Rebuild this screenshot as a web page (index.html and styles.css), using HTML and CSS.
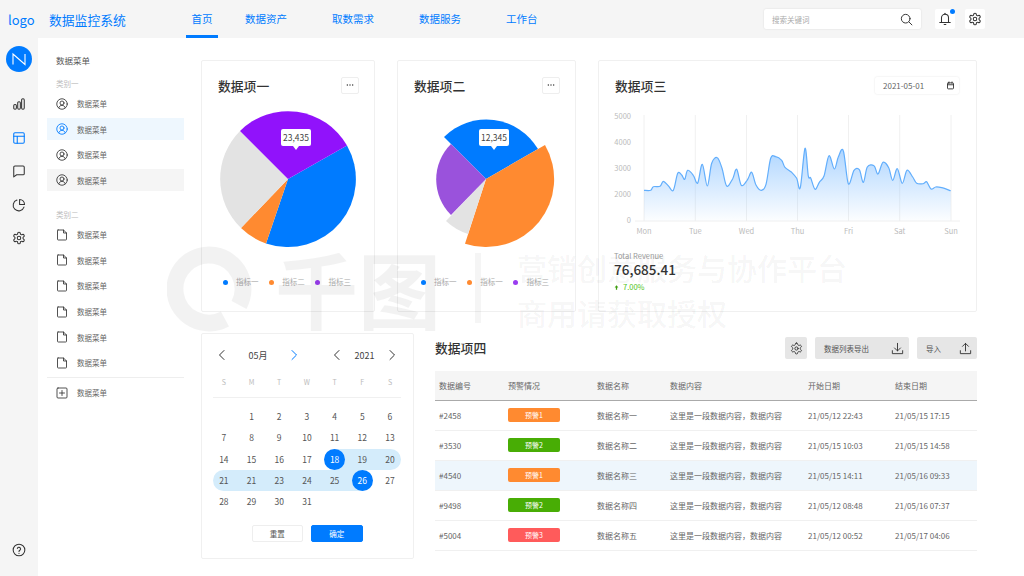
FILE: index.html
```html
<!DOCTYPE html>
<html lang="zh-CN">
<head>
  <meta charset="UTF-8" />
  <title>数据监控系统</title>
  <link rel="stylesheet" href="styles.css">
</head>
<body>

  <!-- ICON SPRITE -->
  <svg class="sprite" xmlns="http://www.w3.org/2000/svg">
    <symbol id="i-user" viewBox="0 0 24 24"><circle cx="12" cy="12" r="10.5"/><circle cx="12" cy="10" r="4"/><path d="M5.5 19.5c1-3.2 3.6-4.8 6.5-4.8s5.500 1.600 6.500 4.800"/></symbol>
    <symbol id="i-doc" viewBox="0 0 24 24"><path d="M4 2h11l6 6v12.500a1.500 1.500 0 0 1-1.500 1.500h-15A1.500 1.500 0 0 1 3 20.500V3.500A1.500 1.500 0 0 1 4 2z"/><path d="M15 2v6h6"/></symbol>
    <symbol id="i-plus" viewBox="0 0 24 24"><rect x="2" y="2" width="20" height="20" rx="2"/><path d="M12 7v10M7 12h10"/></symbol>
    <symbol id="i-bars" viewBox="0 0 24 24"><rect x="3" y="13" width="4.500" height="8" rx="2"/><rect x="9.800" y="8" width="4.500" height="13" rx="2"/><rect x="16.500" y="3" width="4.500" height="18" rx="2"/></symbol>
    <symbol id="i-layout" viewBox="0 0 24 24"><rect x="3" y="3" width="18" height="18" rx="2"/><path d="M3 9h18M9 9v12"/></symbol>
    <symbol id="i-chat" viewBox="0 0 24 24"><path d="M5 3.500h14A2 2 0 0 1 21 5.500v11a2 2 0 0 1-2 2H8l-5 3.500V5.500a2 2 0 0 1 2-2z"/></symbol>
    <symbol id="i-pie" viewBox="0 0 24 24"><path d="M20.500 15.500A9.500 9.500 0 1 1 8.500 3.500"/><path d="M13 2.500a9 9 0 0 1 8.500 8.500H13z"/></symbol>
    <symbol id="i-gear" viewBox="0 0 24 24"><path d="M12.220 2h-.44a2 2 0 0 0-2 2v.18a2 2 0 0 1-1 1.730l-.43.25a2 2 0 0 1-2 0l-.15-.08a2 2 0 0 0-2.730.73l-.22.38a2 2 0 0 0 .73 2.730l.15.1a2 2 0 0 1 1 1.720v.51a2 2 0 0 1-1 1.740l-.15.09a2 2 0 0 0-.73 2.730l.22.38a2 2 0 0 0 2.730.73l.15-.08a2 2 0 0 1 2 0l.43.25a2 2 0 0 1 1 1.730V20a2 2 0 0 0 2 2h.44a2 2 0 0 0 2-2v-.18a2 2 0 0 1 1-1.730l.43-.25a2 2 0 0 1 2 0l.15.08a2 2 0 0 0 2.730-.73l.22-.39a2 2 0 0 0-.73-2.730l-.15-.08a2 2 0 0 1-1-1.740v-.5a2 2 0 0 1 1-1.740l.15-.09a2 2 0 0 0 .73-2.730l-.22-.38a2 2 0 0 0-2.730-.73l-.15.08a2 2 0 0 1-2 0l-.43-.25a2 2 0 0 1-1-1.730V4a2 2 0 0 0-2-2z"/><circle cx="12" cy="12" r="3"/></symbol>
    <symbol id="i-help" viewBox="0 0 24 24"><circle cx="12" cy="12" r="10"/><path d="M9.200 9.300a2.900 2.900 0 0 1 5.600.9c0 1.900-2.800 2.500-2.800 4.300"/><path d="M12 17.800v.2"/></symbol>
    <symbol id="i-search" viewBox="0 0 24 24"><circle cx="10.500" cy="10.500" r="8"/><path d="M16.500 16.500L22 22"/></symbol>
    <symbol id="i-bell" viewBox="0 0 24 24"><path d="M6 18V10a6 6 0 0 1 12 0v8"/><path d="M3 18h18"/><path d="M12 2v2"/><path d="M10.500 21.500h3"/></symbol>
    <symbol id="i-left" viewBox="0 0 24 24"><path d="M16 3L7 12l9 9"/></symbol>
    <symbol id="i-right" viewBox="0 0 24 24"><path d="M8 3l9 9-9 9"/></symbol>
    <symbol id="i-cal" viewBox="0 0 24 24"><rect x="4" y="5" width="16" height="16" rx="2"/><path d="M4 10h16M8 2.500V6M16 2.500V6"/></symbol>
    <symbol id="i-down" viewBox="0 0 24 24"><path d="M12 2.500v14M6.500 11l5.500 5.500 5.500-5.500"/><path d="M2.500 16v5.500h19V16"/></symbol>
    <symbol id="i-up" viewBox="0 0 24 24"><path d="M12 16.500v-14M6.500 8L12 2.500 17.500 8"/><path d="M2.500 16v5.500h19V16"/></symbol>
    <symbol id="i-dots" viewBox="0 0 18 17"><circle cx="6" cy="8" r=".8"/><circle cx="9" cy="8" r=".8"/><circle cx="12" cy="8" r=".8"/></symbol>
  </svg>

  <div class="app">

    <!-- TOP BAR -->
    <header class="topbar">
      <div class="logo">logo</div>
      <div class="app-title">数据监控系统</div>
      <nav class="nav">
        <a class="nav-item active">首页</a>
        <a class="nav-item">数据资产</a>
        <a class="nav-item">取数需求</a>
        <a class="nav-item">数据服务</a>
        <a class="nav-item">工作台</a>
      </nav>
      <div class="top-tools">
        <div class="search">
          <span>搜索关键词</span>
          <svg class="icon search-icon"><use href="#i-search"/></svg>
        </div>
        <div class="tool-btn bell">
          <svg class="icon"><use href="#i-bell"/></svg>
          <i class="dot"></i>
        </div>
        <div class="tool-btn">
          <svg class="icon"><use href="#i-gear"/></svg>
        </div>
      </div>
    </header>

    <div class="body-row">

      <!-- ICON RAIL -->
      <aside class="rail">
        <div class="avatar">
          <svg viewBox="0 0 26 26"><path d="M7 18.500V8L19 18.500V8"/></svg>
        </div>
        <svg class="icon"><use href="#i-bars"/></svg>
        <svg class="icon blue"><use href="#i-layout"/></svg>
        <svg class="icon"><use href="#i-chat"/></svg>
        <svg class="icon"><use href="#i-pie"/></svg>
        <svg class="icon"><use href="#i-gear"/></svg>
        <svg class="icon help"><use href="#i-help"/></svg>
      </aside>

      <!-- MENU -->
      <aside class="menu">
        <div class="menu-title">数据菜单</div>
        <div class="menu-cat">类别一</div>
        <div class="menu-group">
          <div class="menu-item"><svg class="icon"><use href="#i-user"/></svg>数据菜单</div>
          <div class="menu-item selected"><svg class="icon"><use href="#i-user"/></svg>数据菜单</div>
          <div class="menu-item"><svg class="icon"><use href="#i-user"/></svg>数据菜单</div>
          <div class="menu-item hover"><svg class="icon"><use href="#i-user"/></svg>数据菜单</div>
        </div>
        <div class="menu-cat second">类别二</div>
        <div class="menu-group">
          <div class="menu-item"><svg class="icon"><use href="#i-doc"/></svg>数据菜单</div>
          <div class="menu-item"><svg class="icon"><use href="#i-doc"/></svg>数据菜单</div>
          <div class="menu-item"><svg class="icon"><use href="#i-doc"/></svg>数据菜单</div>
          <div class="menu-item"><svg class="icon"><use href="#i-doc"/></svg>数据菜单</div>
          <div class="menu-item"><svg class="icon"><use href="#i-doc"/></svg>数据菜单</div>
          <div class="menu-item"><svg class="icon"><use href="#i-doc"/></svg>数据菜单</div>
        </div>
        <div class="menu-line"></div>
        <div class="menu-item"><svg class="icon"><use href="#i-plus"/></svg>数据菜单</div>
      </aside>

      <main class="main">

        <div class="row-top">

          <!-- CARD 1 -->
          <section class="card pie-card">
            <div class="card-head">
              <h2>数据项一</h2>
              <div class="more"><svg><use href="#i-dots"/></svg></div>
            </div>
            <div class="pie-wrap">
              <svg class="pie" viewBox="202 100 172 160">
                <path fill="#007bff" d="M288 179L347 145.500A68 68 0 0 1 266 243.500Z"/>
                <path fill="#ff8a30" d="M288 179L266 243.500A68 68 0 0 1 241 228Z"/>
                <path fill="#e3e3e3" d="M288 179L241 228A68 68 0 0 1 240 131Z"/>
                <path fill="#9112fb" d="M288 179L240 131A68 68 0 0 1 347 145.500Z"/>
              </svg>
              <div class="pie-tip first">23,435</div>
            </div>
            <div class="legend">
              <span class="legend-item"><i class="c-blue"></i>指标一</span>
              <span class="legend-item"><i class="c-orange"></i>指标二</span>
              <span class="legend-item"><i class="c-purple"></i>指标三</span>
            </div>
          </section>

          <!-- CARD 2 -->
          <section class="card pie-card wide">
            <div class="card-head">
              <h2>数据项二</h2>
              <div class="more"><svg><use href="#i-dots"/></svg></div>
            </div>
            <div class="pie-wrap">
              <svg class="pie" viewBox="398 100 177 160">
                <path fill="#007bff" d="M486 179L444 137A60 60 0 0 1 538 149Z"/>
                <path fill="#ff8a30" d="M486 179L545 145A68 68 0 0 1 465 243.700Z"/>
                <path fill="#e3e3e3" d="M486 179L468 234A58 58 0 0 1 446 221Z"/>
                <path fill="#9a52dc" d="M486 179L451 215A50 50 0 0 1 451 144Z"/>
              </svg>
              <div class="pie-tip second">12,345</div>
            </div>
            <div class="legend">
              <span class="legend-item"><i class="c-blue"></i>指标一</span>
              <span class="legend-item"><i class="c-orange"></i>指标一</span>
              <span class="legend-item"><i class="c-purple"></i>指标三</span>
            </div>
          </section>

          <!-- CARD 3 -->
          <section class="card line-card">
            <div class="card-head">
              <h2>数据项三</h2>
              <div class="date-box">2021-05-01<svg class="icon"><use href="#i-cal"/></svg></div>
            </div>
            <svg class="line-chart" viewBox="599 105 377 135">
              <defs>
                <linearGradient id="areaFill" x1="0" y1="0" x2="0" y2="1">
                  <stop offset="0" stop-color="#7dbcff" stop-opacity=".62"/>
                  <stop offset="1" stop-color="#7dbcff" stop-opacity=".02"/>
                </linearGradient>
              </defs>
              <g class="grid">
                <path d="M644 115V221M695.300 115V221M746.500 115V221M797.500 115V221M848.500 115V221M899.700 115V221M951 115V221M635 221H960"/>
              </g>
              <path id="chartArea" fill="url(#areaFill)"/>
              <path id="chartLine" class="chart-line"/>
              <g class="axis-y">
                <text x="631" y="115.700">5000</text>
                <text x="631" y="141.700">4000</text>
                <text x="631" y="167.500">3000</text>
                <text x="631" y="193.500">2000</text>
                <text x="631" y="219.500">0</text>
              </g>
              <g class="axis-x">
                <text x="644" y="230.600">Mon</text>
                <text x="695.300" y="230.600">Tue</text>
                <text x="746.500" y="230.600">Wed</text>
                <text x="797.500" y="230.600">Thu</text>
                <text x="848.500" y="230.600">Fri</text>
                <text x="899.700" y="230.600">Sat</text>
                <text x="951" y="230.600">Sun</text>
              </g>
            </svg>
            <div class="stats">
              <div class="stats-label">Total Revenue</div>
              <div class="stats-value">76,685.41</div>
              <div class="stats-trend"><svg viewBox="0 0 8 8"><path d="M4 0.500L7 4H5V7.500H3V4H1Z"/></svg>7.00%</div>
            </div>
          </section>
        </div>

        <div class="row-bottom">

          <!-- CALENDAR -->
          <section class="card calendar">
            <div class="cal-head">
              <div class="cal-month">
                <svg class="icon"><use href="#i-left"/></svg>
                <span>05月</span>
                <svg class="icon blue"><use href="#i-right"/></svg>
              </div>
              <div class="cal-year">
                <svg class="icon"><use href="#i-left"/></svg>
                <span>2021</span>
                <svg class="icon"><use href="#i-right"/></svg>
              </div>
            </div>
            <div class="cal-week">
              <span>S</span><span>M</span><span>T</span><span>W</span><span>T</span><span>F</span><span>S</span>
            </div>
            <div class="cal-line"></div>
            <div class="cal-days">
              <span></span><span>1</span><span>2</span><span>3</span><span>4</span><span>5</span><span>6</span>
              <span>7</span><span>8</span><span>9</span><span>10</span><span>11</span><span>12</span><span>13</span>
              <span>14</span><span>15</span><span>16</span><span>17</span><span class="band pick from">18</span><span class="band">19</span><span class="band tail">20</span>
              <span class="band head">21</span><span class="band">21</span><span class="band">23</span><span class="band">24</span><span class="band">25</span><span class="band pick to">26</span><span>27</span>
              <span>28</span><span>29</span><span>30</span><span>31</span><span></span><span></span><span></span>
            </div>
            <div class="cal-actions">
              <button class="btn">重置</button>
              <button class="btn primary">确定</button>
            </div>
          </section>

          <!-- TABLE -->
          <section class="table-block">
            <div class="table-head">
              <h2>数据项四</h2>
              <div class="table-tools">
                <div class="gray-btn square"><svg class="icon"><use href="#i-gear"/></svg></div>
                <div class="gray-btn export">数据列表导出<svg class="icon"><use href="#i-down"/></svg></div>
                <div class="gray-btn import">导入<svg class="icon"><use href="#i-up"/></svg></div>
              </div>
            </div>
            <table class="data-table">
              <colgroup>
                <col class="c1"><col class="c2"><col class="c3"><col class="c4"><col class="c5"><col class="c6">
              </colgroup>
              <thead>
                <tr><th>数据编号</th><th>预警情况</th><th>数据名称</th><th>数据内容</th><th>开始日期</th><th>结束日期</th></tr>
              </thead>
              <tbody>
                <tr><td>#2458</td><td><span class="tag orange">预警1</span></td><td>数据名称一</td><td>这里是一段数据内容，数据内容</td><td>21/05/12 22:43</td><td>21/05/15 17:15</td></tr>
                <tr><td>#3530</td><td><span class="tag green">预警2</span></td><td>数据名称二</td><td>这里是一段数据内容，数据内容</td><td>21/05/15 10:03</td><td>21/05/15 14:58</td></tr>
                <tr class="on"><td>#4540</td><td><span class="tag orange">预警1</span></td><td>数据名称三</td><td>这里是一段数据内容，数据内容</td><td>21/05/15 14:11</td><td>21/05/16 09:33</td></tr>
                <tr><td>#9498</td><td><span class="tag green">预警2</span></td><td>数据名称四</td><td>这里是一段数据内容，数据内容</td><td>21/05/12 08:48</td><td>21/05/16 07:37</td></tr>
                <tr><td>#5004</td><td><span class="tag red">预警3</span></td><td>数据名称五</td><td>这里是一段数据内容，数据内容</td><td>21/05/12 00:52</td><td>21/05/17 04:06</td></tr>
              </tbody>
            </table>
          </section>
        </div>
      </main>
    </div>

    <!-- WATERMARK IN THE REFERENCE -->
    <div class="mark" aria-hidden="true">
      <svg class="mark-ring" viewBox="0 0 90 90"><path d="M72 62A34 34 0 1 0 58 76"/></svg>
      <div class="mark-brand">千图</div>
      <div class="mark-bar"></div>
      <div class="mark-text">营销创意服务与协作平台<br>商用请获取授权</div>
    </div>
  </div>

  <script src="chart.js"></script>
</body>
</html>
```

FILE: styles.css
```css
* {
  box-sizing: border-box;
}

body {
  margin: 0;
  font-family: "Noto Sans CJK SC", "Noto Sans", sans-serif;
  color: #333;
  background: #fff;
}

.sprite {
  display: none;
}

.icon {
  width: 14px;
  height: 14px;
  flex: none;
  fill: none;
  stroke: #333;
  stroke-width: 1.8;
  stroke-linecap: round;
  stroke-linejoin: round;
}

.icon.blue {
  stroke: #007bff;
}

.app {
  position: relative;
  width: 1024px;
  height: 576px;
  overflow: hidden;
}

/* top bar */
.topbar {
  height: 38px;
  background: #f5f5f5;
  display: flex;
  align-items: center;
  padding-left: 8px;
}

.logo {
  width: 41px;
  font-size: 13px;
  color: #007bff;
}

.app-title {
  width: 137px;
  font-size: 12.8px;
  color: #007bff;
}

.nav {
  display: flex;
  gap: 34px;
  height: 38px;
}

.nav-item {
  padding: 0 5.5px;
  font-size: 10.5px;
  line-height: 38px;
  color: #007bff;
}

.nav-item.active {
  margin-right: -12.500px;
  border-bottom: 3px solid #007bff;
}

.top-tools {
  margin-left: auto;
  padding-right: 39px;
  display: flex;
  align-items: center;
}

.search {
  width: 157px;
  height: 20px;
  background: #fff;
  border-radius: 2px;
  box-shadow: 0 0 2px rgba(0, 0, 0, .12);
  display: flex;
  align-items: center;
  justify-content: space-between;
  padding: 0 8px 0 8px;
  font-size: 7.500px;
  color: #aaa;
}

.search-icon {
  width: 13px;
  height: 13px;
}

.tool-btn {
  position: relative;
  width: 20px;
  height: 20px;
  margin-left: 10px;
  background: #fff;
  border-radius: 2px;
  display: flex;
  align-items: center;
  justify-content: center;
}

.bell {
  margin-left: 14px;
}

.dot {
  position: absolute;
  top: 0;
  right: 0;
  width: 5px;
  height: 5px;
  border-radius: 50%;
  background: #007bff;
}

/* left rail + menu */
.body-row {
  display: flex;
  height: 538px;
}

.rail {
  width: 38px;
  flex: none;
  background: #f5f5f5;
  display: flex;
  flex-direction: column;
  align-items: center;
  gap: 19.500px;
  padding: 8px 0 19px;
}

.avatar {
  width: 26px;
  height: 26px;
  margin-bottom: 5.500px;
  border-radius: 50%;
  background: #007bff;
}

.avatar svg {
  display: block;
  fill: none;
  stroke: #fff;
  stroke-width: 1.100;
}

.help {
  margin-top: auto;
}

.menu {
  width: 150px;
  padding: 14.500px 4px 0 9px;
  flex: none;
}

.menu-title {
  padding-left: 9px;
  font-size: 8.500px;
  line-height: 14px;
  color: #555;
}

.menu-cat {
  margin-top: 10px;
  margin-bottom: 2px;
  padding-left: 9px;
  font-size: 7.500px;
  line-height: 14px;
  color: #bbb;
}

.menu-cat.second {
  margin-top: 16.500px;
}

.menu-group {
  display: flex;
  flex-direction: column;
  gap: 3.600px;
}

.menu-item {
  height: 22px;
  display: flex;
  align-items: center;
  gap: 9px;
  padding-left: 9px;
  font-size: 7.500px;
  color: #666;
}

.menu-item .icon {
  width: 12px;
  height: 12px;
  stroke-width: 1.700;
}

.menu-item.selected {
  background: #eef7fe;
}

.menu-item.selected .icon {
  stroke: #007bff;
}

.menu-item.hover {
  background: #f5f5f5;
}

.menu-line {
  height: 1px;
  margin: 3.500px 0 3.500px;
  background: #eee;
}

/* main */
.main {
  flex: 1;
  padding: 22px 47px 0 13px;
}

.row-top {
  display: flex;
  gap: 22px;
}

.row-bottom {
  display: flex;
  gap: 21px;
  margin-top: 21px;
}

.card {
  background: #fff;
  border: 1px solid #f0f0f0;
  border-radius: 2px;
}

.pie-card {
  width: 174px;
  height: 252px;
}

.pie-card.wide {
  width: 179px;
}

.line-card {
  width: 379px;
  height: 252px;
}

.card-head {
  display: flex;
  align-items: center;
  justify-content: space-between;
  height: 17px;
  margin-top: 16px;
  padding: 0 15px 0 16px;
}

h2 {
  margin: 0;
  font-size: 12.800px;
  font-weight: 500;
  line-height: 16px;
  color: #333;
}

.more {
  width: 18px;
  height: 17px;
  border: 1px solid #eee;
  border-radius: 2px;
  color: #333;
}

.more svg {
  display: block;
  width: 16px;
  height: 15px;
  fill: #333;
}

.pie-wrap {
  position: relative;
  margin-top: 6px;
  height: 160px;
}

.pie {
  display: block;
  width: 100%;
  height: 160px;
}

.pie-tip {
  position: absolute;
  top: 29px;
  width: 30px;
  height: 17px;
  background: #fff;
  border-radius: 2px;
  font-size: 8.500px;
  line-height: 17px;
  text-align: center;
  color: #444;
}

.pie-tip::after {
  content: "";
  position: absolute;
  left: 11.500px;
  bottom: -4px;
  border: 3.500px solid transparent;
  border-bottom: 0;
  border-top: 4px solid #fff;
}

.pie-tip.first {
  left: 79px;
}

.pie-tip.second {
  left: 81px;
}

.legend {
  display: flex;
  margin-top: 17px;
  padding-left: 20.500px;
}

.wide .legend {
  padding-left: 22.500px;
}

.legend-item {
  width: 46.300px;
  display: flex;
  align-items: center;
  font-size: 7.500px;
  line-height: 10px;
  color: #aaa;
}

.legend-item i {
  width: 5px;
  height: 5px;
  margin-right: 8.500px;
  border-radius: 50%;
}

.c-blue { background: #007bff; }
.c-orange { background: #ff8a30; }
.c-purple { background: #9a3df0; }

.date-box {
  width: 84px;
  height: 17px;
  margin-right: 2px;
  padding: 0 4px 0 8px;
  border-radius: 2px;
  box-shadow: 0 0 2px rgba(0, 0, 0, .12);
  display: flex;
  align-items: center;
  justify-content: space-between;
  font-size: 8px;
  color: #666;
}

.date-box .icon {
  width: 9px;
  height: 9px;
  stroke-width: 2.400;
}

.line-chart {
  display: block;
  width: 377px;
  height: 135px;
  margin-top: 11px;
}

.grid path {
  fill: none;
  stroke: #f0f0f0;
  stroke-width: 1;
}

.chart-line {
  fill: none;
  stroke: #62aefc;
  stroke-width: 1.200;
}

.axis-y text,
.axis-x text {
  font-size: 7.500px;
  fill: #bbb;
  dominant-baseline: central;
}

.axis-y text {
  text-anchor: end;
}

.axis-x text {
  text-anchor: middle;
}

.stats {
  margin-top: 11px;
  padding-left: 15px;
}

.stats-label {
  font-size: 7.500px;
  line-height: 10px;
  color: #999;
}

.stats-value {
  font-size: 13.500px;
  font-weight: 500;
  line-height: 18px;
  margin-top: -1px;
  color: #333;
}

.stats-trend {
  margin-top: 4px;
  display: flex;
  align-items: center;
  gap: 4px;
  font-size: 7.500px;
  line-height: 10px;
  color: #52c41a;
}

.stats-trend svg {
  width: 5px;
  height: 5px;
  fill: #3f9e10;
}

/* calendar */
.calendar {
  width: 213px;
  height: 226px;
  padding: 13px 9px 0 8px;
}

.cal-head {
  display: flex;
  gap: 31px;
  height: 16px;
  padding-left: 6px;
  font-size: 9px;
  color: #444;
}

.cal-month,
.cal-year {
  display: flex;
  align-items: center;
  justify-content: space-between;
}

.cal-month {
  width: 84px;
}

.cal-year {
  width: 67px;
}

.cal-head .icon {
  width: 12px;
  height: 12px;
  stroke-width: 2;
}

.cal-week,
.cal-days {
  display: grid;
  grid-template-columns: repeat(7, 27.700px);
  text-align: center;
}

.cal-week {
  margin-top: 13px;
  font-size: 7px;
  line-height: 12px;
  color: #bbb;
}

.cal-line {
  width: 188px;
  height: 1px;
  margin: 9px 0 8px 3px;
  background: #f0f0f0;
}

.cal-days {
  grid-auto-rows: 21.300px;
  font-size: 8.500px;
  line-height: 21.300px;
  color: #555;
}

.cal-days span {
  position: relative;
  z-index: 0;
}

.band::before {
  content: "";
  position: absolute;
  inset: 0;
  z-index: -2;
  background: #d4ecfb;
}

.band.tail::before {
  right: 3px;
  border-radius: 0 11px 11px 0;
}

.band.head::before {
  left: 3px;
  border-radius: 11px 0 0 11px;
}

.band.from::before {
  left: 50%;
}

.band.to::before {
  right: 50%;
}

.pick {
  color: #fff;
}

.pick::after {
  content: "";
  position: absolute;
  top: 0;
  left: 50%;
  z-index: -1;
  width: 21.300px;
  height: 21.300px;
  margin-left: -10.650px;
  border-radius: 50%;
  background: #007bff;
}

.cal-actions {
  display: flex;
  justify-content: center;
  gap: 8px;
  margin-top: 12.500px;
}

.btn {
  width: 51.500px;
  height: 17px;
  padding: 0;
  border: 1px solid #eee;
  border-radius: 2px;
  background: #fff;
  font-family: inherit;
  font-size: 7.500px;
  color: #555;
}

.btn.primary {
  border-color: #007bff;
  background: #007bff;
  color: #fff;
}

/* table */
.table-block {
  width: 542px;
  padding-top: 4px;
}

.table-head {
  display: flex;
  align-items: center;
  justify-content: space-between;
  height: 22px;
}

.table-tools {
  display: flex;
  gap: 8px;
}

.gray-btn {
  height: 22px;
  background: #e6e6e6;
  border-radius: 2px;
  display: flex;
  align-items: center;
  justify-content: space-between;
  padding: 0 5px 0 9px;
  font-size: 7.500px;
  color: #555;
}

.gray-btn.square {
  width: 22px;
  padding: 0;
  justify-content: center;
}

.export {
  width: 94px;
}

.import {
  width: 60px;
}

.gray-btn .icon {
  width: 13px;
  height: 13px;
  stroke-width: 1.700;
}

.data-table {
  width: 542px;
  margin-top: 12px;
  border-collapse: collapse;
  table-layout: fixed;
  font-size: 8px;
  color: #666;
}

.c1 { width: 69px; }
.c2 { width: 89px; }
.c3 { width: 73px; }
.c4 { width: 138px; }
.c5 { width: 87px; }
.c6 { width: 86px; }

.data-table th {
  height: 29px;
  padding: 0 0 0 4px;
  background: #f5f5f5;
  border-bottom: 1px solid #aaa;
  font-weight: 400;
  text-align: left;
}

.data-table td {
  height: 30px;
  padding: 0 0 0 4px;
  border-bottom: 1px solid #f0f0f0;
}

.data-table tr.on td {
  background: #eef6fc;
}

.tag {
  display: block;
  width: 52px;
  height: 14px;
  border-radius: 2px;
  font-size: 7px;
  line-height: 14px;
  text-align: center;
  color: #fff;
}

.tag.orange { background: #ff8a30; }
.tag.green { background: #48ad05; }
.tag.red { background: #ff5b5b; }

/* watermark */
.mark {
  position: absolute;
  inset: 0;
  pointer-events: none;
}

.mark-ring {
  position: absolute;
  left: 167px;
  top: 243px;
  width: 90px;
  height: 90px;
  fill: none;
  stroke: rgba(0, 0, 0, .05);
  stroke-width: 17;
}

.mark-brand {
  position: absolute;
  left: 275px;
  top: 232px;
  font-size: 83px;
  font-weight: 700;
  line-height: 110px;
  color: rgba(0, 0, 0, .05);
}

.mark-bar {
  position: absolute;
  left: 475px;
  top: 253px;
  width: 6px;
  height: 70px;
  background: rgba(0, 0, 0, .04);
}

.mark-text {
  position: absolute;
  left: 517px;
  top: 245px;
  font-size: 30px;
  font-weight: 500;
  line-height: 45px;
  color: rgba(0, 0, 0, .05);
}
```

FILE: chart.js
```js
// Traced revenue values, [x, y] in page pixels
var raw = [132,301,152,301,160,290,180,289,190,274,205,287,220,301,233,250,245,255,254,268,263,241,280,256,293,279,307,223,322,288,335,220,352,203,366,235,380,288,398,266,410,238,424,286,442,270,455,247,468,285,484,301,498,283,512,205,527,200,545,211,555,232,575,247,590,265,601,293,615,175,625,258,632,264,645,298,658,277,672,258,687,197,703,237,715,201,730,182,745,281,762,241,778,239,790,277,802,231,822,227,834,252,849,217,866,233,878,271,892,236,907,280,921,241,938,261,950,280,970,281,980,275,993,297,1007,291,1025,293,1052,302];

var pts = [];
for (var i = 0; i < raw.length; i += 2) {
  pts.push([600 + raw[i] / 3, 90 + raw[i + 1] / 3]);
}

// Catmull-Rom through every point
var d = "M" + pts[0][0].toFixed(1) + " " + pts[0][1].toFixed(1);
for (var j = 0; j < pts.length - 1; j++) {
  var p0 = pts[j - 1] || pts[j];
  var p1 = pts[j];
  var p2 = pts[j + 1];
  var p3 = pts[j + 2] || p2;
  var c1x = p1[0] + (p2[0] - p0[0]) / 6;
  var c1y = p1[1] + (p2[1] - p0[1]) / 6;
  var c2x = p2[0] - (p3[0] - p1[0]) / 6;
  var c2y = p2[1] - (p3[1] - p1[1]) / 6;
  d += "C" + c1x.toFixed(1) + " " + c1y.toFixed(1) + " " + c2x.toFixed(1) + " " + c2y.toFixed(1) + " " + p2[0].toFixed(1) + " " + p2[1].toFixed(1);
}

document.getElementById("chartLine").setAttribute("d", d);
document.getElementById("chartArea").setAttribute("d", d + "V221H" + pts[0][0].toFixed(1) + "Z");
```
